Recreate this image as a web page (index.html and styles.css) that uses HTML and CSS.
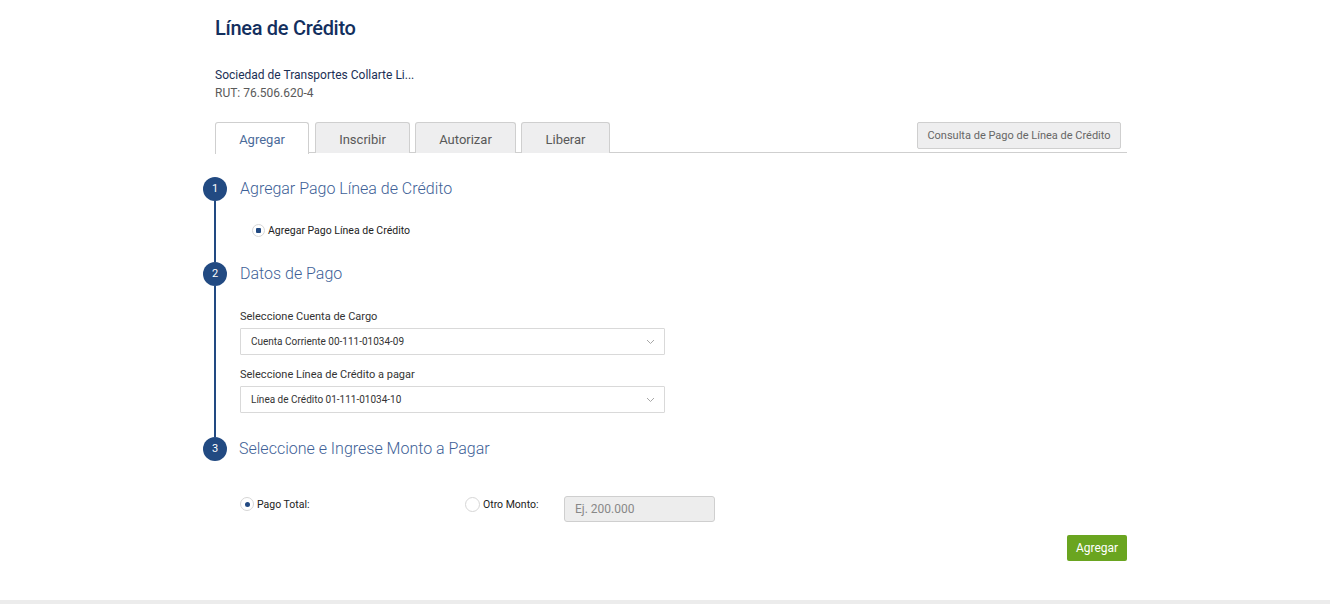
FILE: index.html
```html
<!DOCTYPE html>
<html lang="es">
<head>
<meta charset="utf-8">
<title>Línea de Crédito</title>
<link rel="stylesheet" href="styles.css">
</head>
<body>
<main class="page">
  <h1 class="title">Línea de Crédito</h1>
  <div class="company">
    <div class="company-name">Sociedad de Transportes Collarte Li...</div>
    <div class="company-rut">RUT: 76.506.620-4</div>
  </div>

  <div class="tabbar">
    <div class="tabs">
      <div class="tab tab-active">Agregar</div>
      <div class="tab">Inscribir</div>
      <div class="tab">Autorizar</div>
      <div class="tab">Liberar</div>
    </div>
    <button class="consulta">Consulta de Pago de Línea de Crédito</button>
  </div>

  <div class="steps">
    <section class="step step-1">
      <div class="rail"><span class="num">1</span><span class="line"></span></div>
      <div class="body">
        <h2 class="step-title">Agregar Pago Línea de Crédito</h2>
        <label class="radio-row indent">
          <span class="radio radio-square"></span>
          <span class="radio-label">Agregar Pago Línea de Crédito</span>
        </label>
      </div>
    </section>

    <section class="step step-2">
      <div class="rail"><span class="num">2</span><span class="line"></span></div>
      <div class="body">
        <h2 class="step-title">Datos de Pago</h2>
        <div class="field first">
          <div class="field-label">Seleccione Cuenta de Cargo</div>
          <div class="select">
            <span>Cuenta Corriente 00-111-01034-09</span>
            <svg class="chev" width="9" height="6" viewBox="0 0 9 6"><path d="M1 1l3.5 3.5L8 1" fill="none" stroke="#a7a7a7" stroke-width="1"/></svg>
          </div>
        </div>
        <div class="field">
          <div class="field-label">Seleccione Línea de Crédito a pagar</div>
          <div class="select">
            <span>Línea de Crédito 01-111-01034-10</span>
            <svg class="chev" width="9" height="6" viewBox="0 0 9 6"><path d="M1 1l3.5 3.5L8 1" fill="none" stroke="#a7a7a7" stroke-width="1"/></svg>
          </div>
        </div>
      </div>
    </section>

    <section class="step step-3">
      <div class="rail"><span class="num">3</span></div>
      <div class="body">
        <h2 class="step-title">Seleccione e Ingrese Monto a Pagar</h2>
        <div class="amount-row">
          <label class="radio-row total">
            <span class="radio radio-on"></span>
            <span class="radio-label">Pago Total:</span>
          </label>
          <label class="radio-row otro">
            <span class="radio"></span>
            <span class="radio-label">Otro Monto:</span>
          </label>
          <div class="amount-input">Ej. 200.000</div>
        </div>
      </div>
    </section>
  </div>

  <div class="actions">
    <button class="btn-add">Agregar</button>
  </div>
</main>
<footer class="footer-bar"></footer>
</body>
</html>
```

FILE: styles.css
```css
* { box-sizing: border-box; }
html, body { margin: 0; padding: 0; }
body {
  font-family: Roboto, "Liberation Sans", Arial, sans-serif;
  background: #fff;
  color: #333;
  height: 604px;
  overflow: hidden;
  position: relative;
}
.page {
  width: 912px;
  margin-left: 215px;
  padding-top: 14px;
}
.title {
  margin: 0;
  font-size: 20px;
  line-height: 28px;
  font-weight: 500;
  color: #132f5e;
  letter-spacing: -0.3px;
}
.company {
  margin-top: 24px;
  font-size: 12px;
  line-height: 18px;
}
.company-name { color: #1b2f55; }
.company-rut { color: #5a5a5a; }

.tabbar {
  margin-top: 20px;
  display: flex;
  justify-content: space-between;
  align-items: flex-start;
  border-bottom: 1px solid #cfcfcf;
  height: 31px;
}
.tabs { display: flex; gap: 5px; }
.tab {
  height: 31px;
  padding: 0 20px;
  border: 1px solid #cfcfcf;
  border-bottom: none;
  border-radius: 3px 3px 0 0;
  background: #eeeeef;
  color: #585858;
  font-size: 13px;
  line-height: 33px;
  text-align: center;
}
.tab:nth-child(1) { width: 94px; margin-right: 1px; }
.tab:nth-child(2) { width: 95px; }
.tab:nth-child(3) { width: 101px; }
.tab:nth-child(4) { width: 89px; }
.tab-active {
  background: #fff;
  color: #4b6b9a;
  height: 32px;
  position: relative;
  z-index: 1;
}
.consulta {
  margin-right: 6px;
  width: 204px;
  height: 27px;
  border: 1px solid #cfcfcf;
  border-radius: 2px;
  background: #eeeeef;
  color: #666;
  font-family: inherit;
  font-size: 11px;
  padding: 0;
}

.steps { margin-top: 24px; margin-left: -12px; }
.step {
  display: grid;
  grid-template-columns: 24px 1fr;
  column-gap: 13px;
}
.rail {
  display: flex;
  flex-direction: column;
  align-items: center;
}
.num {
  flex: none;
  width: 24px;
  height: 24px;
  border-radius: 50%;
  background: #224a82;
  color: #fff;
  font-size: 11px;
  line-height: 24px;
  text-align: center;
}
.line {
  flex: 1;
  width: 1.5px;
  background: #224a82;
}
.step-title {
  margin: 0;
  font-size: 16px;
  line-height: 24px;
  font-weight: 300;
  color: #3e5f97;
}
.step-1 .body { padding-bottom: 25px; }
.step-2 .body { padding-bottom: 24px; }
.step-3 .step-title { margin-left: -1px; }

.radio-row {
  display: flex;
  align-items: center;
  gap: 3px;
}
.radio-row.indent { margin-top: 22px; margin-left: 12px; height: 14px; }
.radio {
  flex: none;
  width: 13px;
  height: 13px;
  border-radius: 50%;
  border: 1px solid #d6d6d6;
  background: #fff;
  display: flex;
  align-items: center;
  justify-content: center;
}
.radio-square::after {
  content: "";
  width: 5px;
  height: 5px;
  background: #224a82;
  border-radius: 1px;
}
.radio-on::after {
  content: "";
  width: 5px;
  height: 5px;
  background: #224a82;
  border-radius: 50%;
}
.radio-label {
  font-size: 10.5px;
  color: #222;
}

.field.first { margin-top: 24px; }
.field { margin-top: 13px; width: 425px; }
.field-label {
  font-size: 11px;
  line-height: 14px;
  color: #333;
}
.select {
  margin-top: 4px;
  height: 27px;
  border: 1px solid #d9d9d9;
  border-radius: 1px;
  display: flex;
  align-items: center;
  justify-content: space-between;
  padding: 0 9px 0 10px;
  font-size: 10px;
  color: #333;
}
.chev { display: block; }

.amount-row {
  margin-top: 35px;
  display: flex;
  align-items: flex-start;
  height: 26px;
}
.amount-row .radio-row { margin-top: 1px; }
.amount-row .radio { width: 14px; height: 14px; }
.radio-row.total { width: 225px; margin-left: 0; }
.radio-row.otro { width: 99px; }
.radio-row.otro .radio { width: 15px; height: 15px; }
.amount-input {
  width: 151px;
  height: 26px;
  border: 1px solid #cfcfcf;
  border-radius: 3px;
  background: #ededed;
  color: #888;
  font-size: 12px;
  line-height: 24px;
  padding-left: 10px;
}

.actions {
  margin-top: 13px;
  display: flex;
  justify-content: flex-end;
}
.btn-add {
  width: 60px;
  height: 26px;
  border: none;
  border-radius: 2px;
  background: #6aa520;
  color: #fff;
  font-family: inherit;
  font-size: 12px;
  padding: 0;
}

.footer-bar {
  position: absolute;
  left: 0;
  right: 0;
  bottom: 0;
  height: 4px;
  background: #ececec;
}
```
